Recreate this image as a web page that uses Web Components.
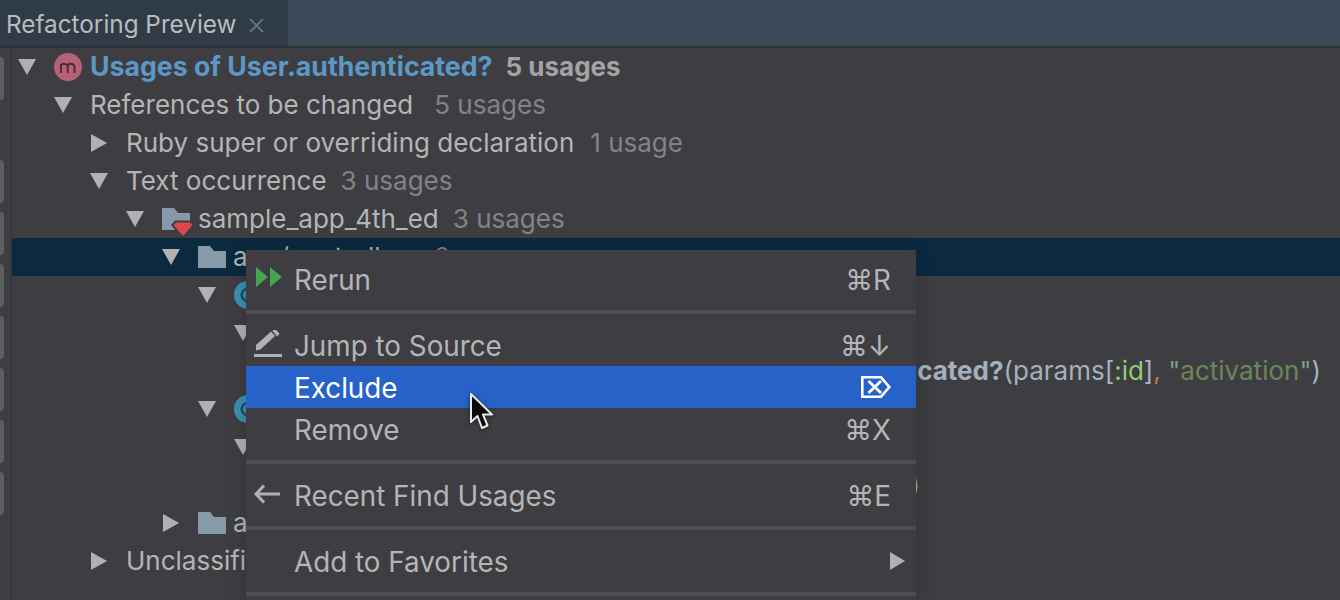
<!DOCTYPE html>
<html><head><meta charset="utf-8"><title>Refactoring Preview</title>
<style>
html,body{margin:0;padding:0;height:600px;overflow:hidden;background:#3e3e42}
body{font-family:Inter,"Liberation Sans",sans-serif;font-size:26px;color:#b4b5b6}
</style></head><body>
<ide-window>
  <tool-tabs slot="tabs" label="Refactoring Preview"></tool-tabs>
  <side-strip slot="strip"></side-strip>
  <usage-tree slot="tree">
    <tree-row level="0" caret="down" icon="method"><b class="link" style="color:#5b98c6;font-weight:700;font-size:26.7px">Usages of User.authenticated?</b><tree-count gap="13" bold>5 usages</tree-count></tree-row>
    <tree-row level="1" caret="down">References to be changed<tree-count gap="21">5 usages</tree-count></tree-row>
    <tree-row level="2" caret="right">Ruby super or overriding declaration<tree-count gap="16">1 usage</tree-count></tree-row>
    <tree-row level="2" caret="down">Text occurrence<tree-count gap="14">3 usages</tree-count></tree-row>
    <tree-row level="3" caret="down" icon="module">sample_app_4th_ed<tree-count gap="14">3 usages</tree-count></tree-row>
    <tree-row level="4" caret="down" icon="folder" selected>app/controllers<tree-count gap="15">2 usages</tree-count></tree-row>
    <tree-row level="5" caret="down" icon="class">account_activations_controller.rb</tree-row>
    <tree-row level="6" caret="down">edit</tree-row>
    <tree-row end="19"><code-line></code-line></tree-row>
    <tree-row level="5" caret="down" icon="class">sessions_helper.rb</tree-row>
    <tree-row level="6" caret="down">current_user</tree-row>
    <tree-row end="420"><span style="color:#a9b7c6">)</span></tree-row>
    <tree-row level="4" caret="right" icon="folder">app/helpers</tree-row>
    <tree-row level="2" caret="right">Unclassified<tree-count gap="15">1 usage</tree-count></tree-row>
  </usage-tree>
  <popup-menu slot="menu">
    <menu-item icon="rerun" key="⌘R">Rerun</menu-item>
    <menu-sep></menu-sep>
    <menu-item icon="pencil" key="⌘↓">Jump to Source</menu-item>
    <menu-item active keyicon="exclude">Exclude</menu-item>
    <menu-item key="⌘X">Remove</menu-item>
    <menu-sep></menu-sep>
    <menu-item icon="back" key="⌘E">Recent Find Usages</menu-item>
    <menu-sep></menu-sep>
    <menu-item keyicon="sub">Add to Favorites</menu-item>
    <menu-sep></menu-sep>
  </popup-menu>
  <mouse-cursor slot="menu"></mouse-cursor>
</ide-window>
<script>
const ICONS={
 down:'<svg width="18" height="16" viewBox="0 0 18 16"><path d="M0 0H18L9 16Z" fill="#afb1b3"/></svg>',
 right:'<svg width="18" height="18" viewBox="0 0 18 18"><path d="M1 0L17 9L1 18Z" fill="#afb1b3"/></svg>',
 method:'<svg width="28" height="28" viewBox="0 0 28 28"><circle cx="14" cy="14" r="14" fill="#b8607a"/><path d="M7 20V11M7 13.5Q7 10.8 9.8 10.8T13.7 13.5V20M13.7 13.5Q13.7 10.8 16.6 10.8T20.5 13.5V20" fill="none" stroke="#4a2b35" stroke-width="1.9"/></svg>',
 folder:'<svg width="28" height="22" viewBox="0 0 28 22"><path d="M0 0H12L16 5H28V22H0Z" fill="#869aaa"/></svg>',
 module:'<svg width="28" height="22" viewBox="0 0 28 22"><path d="M0 0H12L16 5H28V22H0Z" fill="#869aaa"/><path d="M9 17L13 12.500H29L33 17L21.500 30H20Z" fill="#3e3e42"/><path d="M11.500 17L14 14.500H28L30.500 17L21 28Z" fill="#d9484a"/></svg>',
 class:'<svg width="28" height="28" viewBox="0 0 28 28"><circle cx="14" cy="14" r="14" fill="#3c8fb3"/><path d="M18.500 10.500A6 6 0 1 0 18.500 17.500" fill="none" stroke="#1e4b60" stroke-width="2.400"/></svg>',
 rerun:'<svg width="26" height="20" viewBox="0 0 26 20" style="margin-top:-4px"><path d="M0 0L12 10L0 20ZM14 0L26 10L14 20Z" fill="#45a551"/></svg>',
 pencil:'<svg width="28" height="28" viewBox="0 0 28 28" style="margin-top:-2px"><path d="M2 15L17 1.500L21 6L6.500 19.500L2 20.500ZM19 0L22 0Q24.500 2 25.500 4L23 6.500L18.500 1Z" fill="#afb1b3"/><rect x="0" y="24" width="28" height="3" fill="#afb1b3"/></svg>',
 back:'<svg width="26" height="20" viewBox="0 0 26 20" style="margin-top:-2px"><path d="M10 1.500L2 10L10 18.500M2 10H26" fill="none" stroke="#afb1b3" stroke-width="3"/></svg>',
 exclude:'<svg width="30" height="22" viewBox="0 0 30 22"><path d="M1.300 1.300H20L28.300 11L20 20.700H1.300Z" fill="none" stroke="#fff" stroke-width="2.600"/><path d="M7.500 5L20 17M20 5L7.500 17" stroke="#fff" stroke-width="2.800" fill="none"/></svg>',
 sub:'<svg width="15" height="18" viewBox="0 0 15 18"><path d="M0 0L15 9L0 18Z" fill="#afb1b3"/></svg>'
};
class Base extends HTMLElement{
  constructor(){super();this.attachShadow({mode:'open'});}
  html(s){this.shadowRoot.innerHTML=s;}
}
customElements.define('ide-window',class extends Base{connectedCallback(){this.html(`<style>
:host{display:grid;grid-template-columns:12px 1fr;grid-template-rows:48px 552px;width:1340px;height:600px;position:relative;overflow:hidden;background:#3e3e42}
.t{grid-column:1/3}
</style><div class="t"><slot name="tabs"></slot></div><slot name="strip"></slot><slot name="tree"></slot><slot name="menu"></slot>`);}});
customElements.define('tool-tabs',class extends Base{connectedCallback(){this.html(`<style>
:host{display:flex;height:48px;box-sizing:border-box;background:#3b4857;border-bottom:2px solid #303033;color:#b9bcbf}
.tab{width:288px;box-sizing:border-box;background:#303b48;display:flex;align-items:center;padding:2px 0 0 6px;font-size:24.3px;gap:13px}
svg{display:block;margin-top:2px}
</style><div class="tab"><span>${this.getAttribute('label')}</span><svg width="15" height="15" viewBox="0 0 15 15"><path d="M1 1L14 14M14 1L1 14" stroke="#6d7479" stroke-width="1.800"/></svg></div>`);}});
customElements.define('side-strip',class extends Base{connectedCallback(){this.html(`<style>
:host{display:flex;flex-direction:column;gap:9px;box-sizing:border-box;width:12px;padding-top:112px;border-right:1px solid #303033;background:#3e3e42;position:relative}
i{display:block;width:4px;height:43px;background:#5b5f5f;border-radius:0 4px 4px 0}
.f{margin-top:-103px;margin-bottom:51px}
</style><i class="f"></i>${'<i></i>'.repeat(7)}`);}});
customElements.define('usage-tree',class extends Base{connectedCallback(){this.html(`<style>:host{display:block;overflow:hidden}</style><slot></slot>`);}});
customElements.define('tree-row',class extends Base{connectedCallback(){
  const l=this.getAttribute('level'),c=this.getAttribute('caret'),ic=this.getAttribute('icon'),e=this.getAttribute('end');
  const caret=c?`<span class="c" style="margin-right:18px">${ICONS[c]}</span>`:'';
  const icon=ic?`<span class="i">${ICONS[ic]}</span>`:'';
  const gap=ic==='method'?8:(ic==='module'?8:7);
  this.html(`<style>
:host{display:flex;align-items:center;height:38px;white-space:nowrap;box-sizing:border-box;padding-bottom:2px;
padding-left:${e?0:6+36*(+l)}px;${e?`justify-content:flex-end;padding-right:${e}px;`:''}${this.hasAttribute('selected')?'background:#0b2a40;':''}}
.c{display:flex;width:18px;align-items:center;justify-content:center;flex:none;margin-top:2px}
.i{display:flex;width:28px;margin-right:${gap}px;flex:none;align-items:flex-start;margin-top:2px}
.i svg{display:block;overflow:visible}
</style>${caret}${icon}<slot></slot>`);}});
customElements.define('tree-count',class extends Base{connectedCallback(){const b=this.hasAttribute('bold');this.html(`<style>
:host{display:inline;margin-left:${this.getAttribute('gap')}px;color:${b?'#a2a3a4':'#828385'};font-weight:${b?700:400}}</style><slot></slot>`);}});
customElements.define('code-line',class extends Base{connectedCallback(){this.html(`<style>
:host{display:inline;color:#a3b1bf}b{font-weight:700}.g{color:#8fcf6d}.o{color:#c07a38}.s{color:#6a8759}.q{color:#7f9a85}
</style>if user &amp;&amp; !user.activated? &amp;&amp; user.<b>authenticated?</b>(params[<span class="g">:id</span>]<span class="o">,</span> <span class="q">"</span><span class="s">activation</span><span class="q">"</span>)`);}});
customElements.define('popup-menu',class extends Base{connectedCallback(){this.html(`<style>
:host{position:absolute;left:246px;top:250px;width:670px;box-sizing:border-box;padding-top:8px;background:#3e3e42;
box-shadow:0 0 18px rgba(0,0,0,.2);display:block;font-size:27.8px}
</style><slot></slot>`);}});
customElements.define('menu-item',class extends Base{connectedCallback(){
  const ic=this.getAttribute('icon'),k=this.getAttribute('key'),ki=this.getAttribute('keyicon'),a=this.hasAttribute('active');
  const off={rerun:2,pencil:0,back:0}[ic]||0;
  const rp=ki==='sub'?11:25;
  this.html(`<style>
:host{display:flex;align-items:center;height:42px;box-sizing:border-box;padding-right:${rp}px;white-space:nowrap;${a?'background:#2762c8;color:#fff;':''}}
.i{display:flex;flex:none;width:48px;box-sizing:border-box;padding-left:${8+off}px;align-items:center}
.i svg{display:block}
.t{flex:1;padding-top:2px}.k{display:flex;align-items:center;padding-top:2px}
.k svg{display:block;margin-top:-2px}
</style><span class="i">${ic?ICONS[ic]:''}</span><span class="t"><slot></slot></span><span class="k">${k||''}${ki?ICONS[ki]:''}</span>`);}});
customElements.define('menu-sep',class extends Base{connectedCallback(){this.html(`<style>
:host{display:flex;align-items:center;height:24px}i{display:block;width:100%;height:4px;background:#4e4e52}</style><i></i>`);}});
customElements.define('mouse-cursor',class extends Base{connectedCallback(){this.html(`<style>
:host{position:absolute;left:470px;top:393px;width:24px;height:38px;display:block;filter:drop-shadow(0 1px 2px rgba(0,0,0,.5))}
svg{display:block;overflow:visible}</style><svg width="24" height="38" viewBox="0 0 24 38"><path d="M1 1V29L7.500 23L12 35L17.500 32.500L13 21.500H22Z" fill="#0a0a0a" stroke="#e8e8e8" stroke-width="2" stroke-linejoin="round"/></svg>`);}});
</script>
</body></html>
